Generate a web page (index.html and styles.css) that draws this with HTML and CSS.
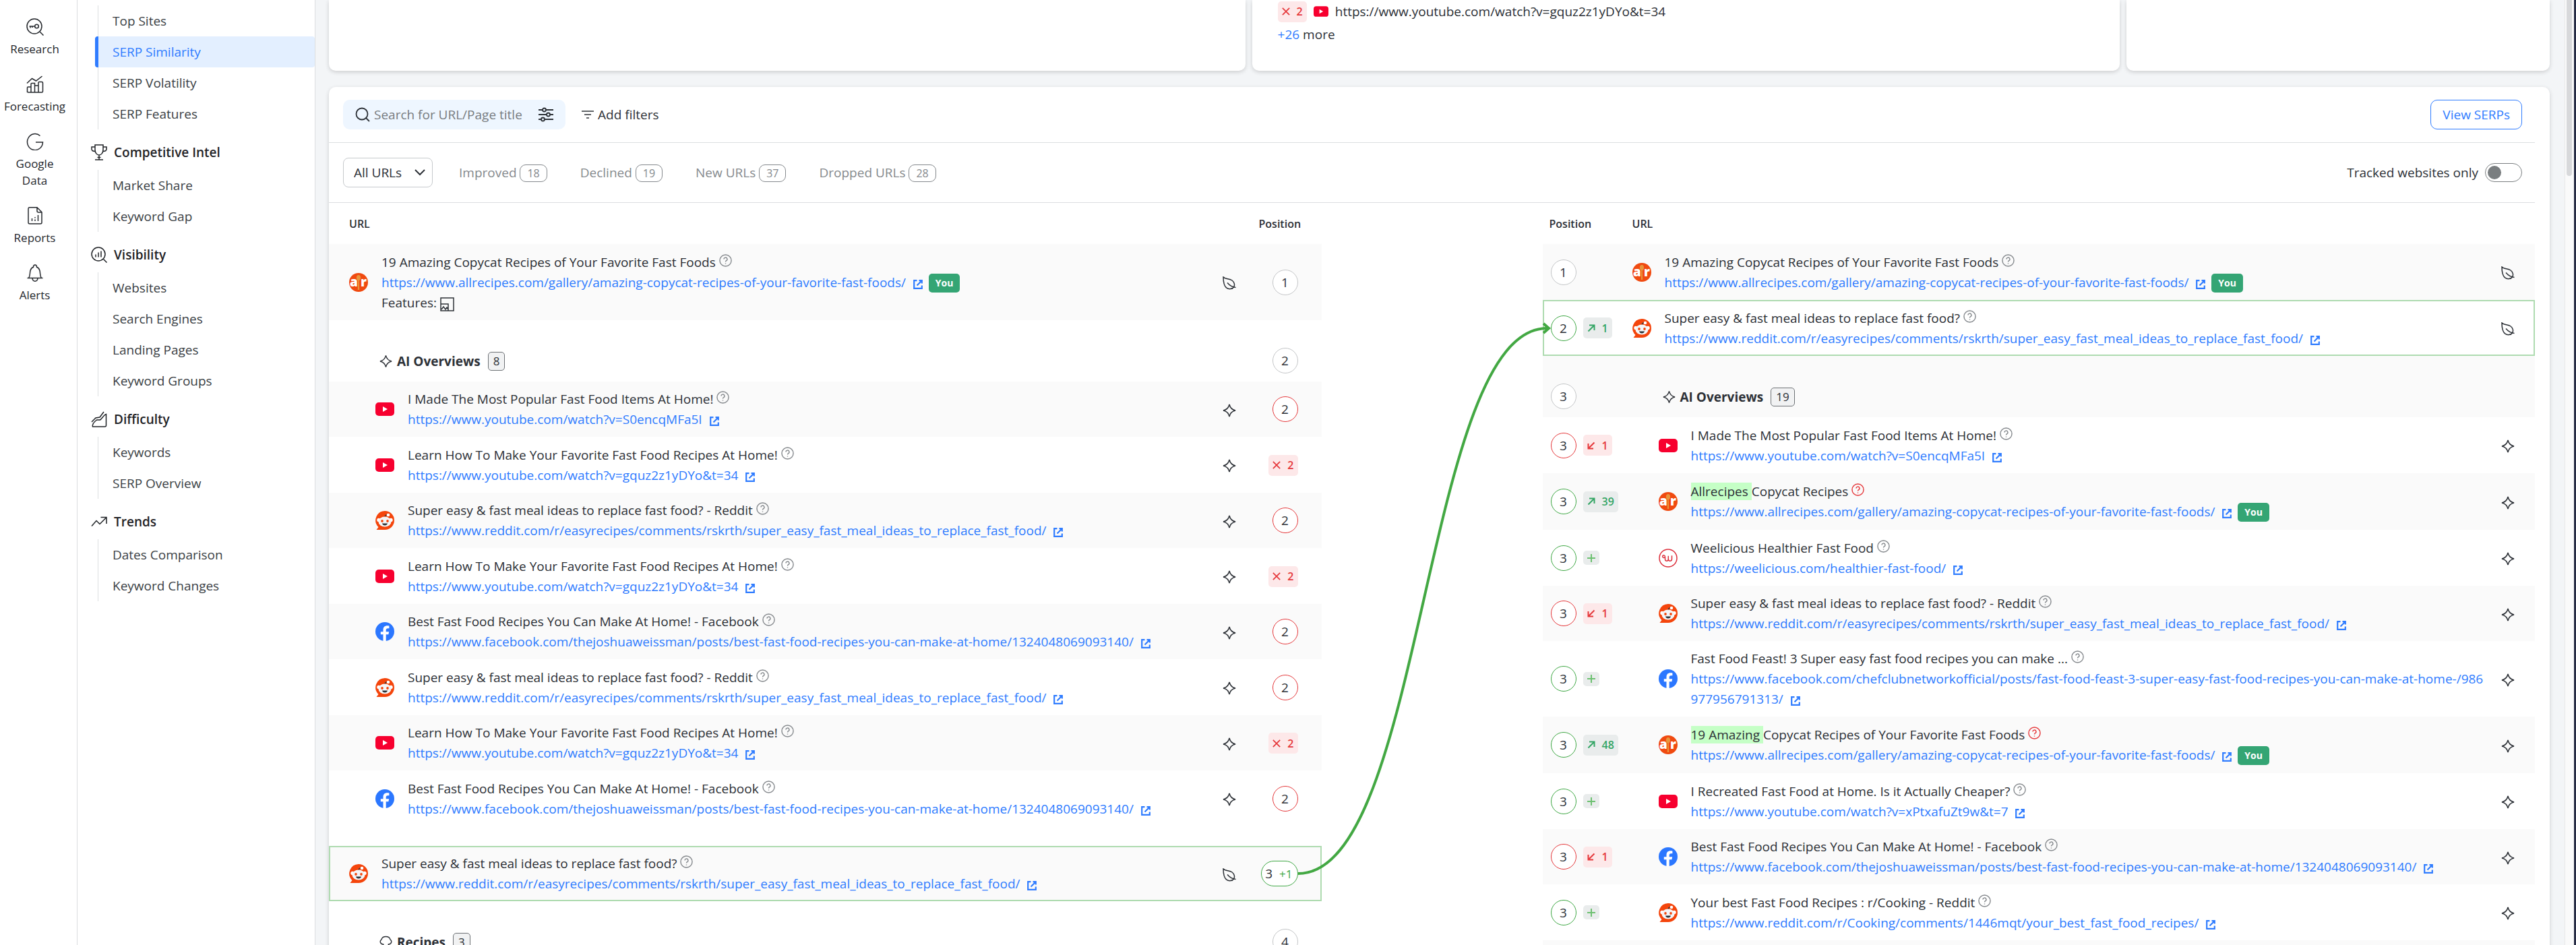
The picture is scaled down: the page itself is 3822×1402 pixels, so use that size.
FILE: index.html
```html
<!DOCTYPE html>
<html lang="en">
<head>
  <meta charset="UTF-8" />
  <meta name="viewport" content="width=device-width, initial-scale=1" />
  <title>SERP Similarity</title>
  <link rel="stylesheet" href="styles.css">
</head>
<body>
  <!-- Icon sprite -->
  <svg class="sprite" aria-hidden="true">
    <symbol id="help" viewBox="0 0 20 20"><circle cx="10" cy="10" r="9" /><path d="M7.4 8a2.6 2.6 0 1 1 3.9 2.2c-.9.5-1.3 1-1.3 2" /><path d="M10 14.2v1.2" /></symbol>
    <symbol id="ext" viewBox="0 0 14 14"><path d="M5.5 1.2H1.2v11.6h11.6V8.5M8.5 1.2h4.3v4.3M12.5 1.5 5.5 8.5" /></symbol>
    <symbol id="spark" viewBox="0 0 20 20"><path d="M10 1c1 4.500 4.500 8 9 9-4.500 1-8 4.500-9 9-1-4.500-4.500-8-9-9 4.500-1 8-4.500 9-9z" /></symbol>
    <symbol id="leaf" viewBox="0 0 20 20"><path d="M1 1c3 3.500 9 2 13 5 3.500 2.600 4.500 7 2.500 10-2 3.200-7.500 3.500-11 .8C1.500 13.600 1 7 1 1zM7 9.500c3 3.500 7 6.500 12.500 7" /></symbol>
    <symbol id="cross" viewBox="0 0 14 14"><path d="M1 1l12 12M13 1 1 13" /></symbol>
    <symbol id="up" viewBox="0 0 12 12"><path d="M1.500 10.500 10 2M3 1.500h7.500V9" /></symbol>
    <symbol id="down" viewBox="0 0 12 12"><path d="M10.500 1.500 2 10M1.500 3v7.500H9" /></symbol>
    <symbol id="plus" viewBox="0 0 12 12"><path d="M6 0v12M0 6h12" /></symbol>
    <symbol id="yt" viewBox="0 0 28 28"><rect x="0" y="4" width="28" height="20" rx="5" fill="#f7002f" /><path d="M11 10v8l7-4z" fill="#fff" /></symbol>
    <symbol id="fb" viewBox="0 0 28 28"><circle cx="14" cy="14" r="14" fill="#2b77ff" /><path d="M11.500 28V18.300H7.800v-4h3.700v-2.600c0-4.300 2.100-6.400 6.200-6.400 1 0 2 .1 2.700.3v3.700h-1.900c-2 0-2.800.9-2.800 2.600v2.400h4.500l-.8 4h-3.700V28z" fill="#fff" /></symbol>
    <symbol id="reddit" viewBox="0 0 28 28"><path d="M14 0a14 14 0 1 1 0 28H1.500l3-4A14 14 0 0 1 14 0z" fill="#f4450c" /><path d="M14 9.500c.3-2.800 1.500-4 4-3.500" fill="none" stroke="#333" stroke-width="1.400" /><circle cx="19" cy="6" r="2.300" fill="#fff" /><circle cx="5" cy="13.500" r="2.700" fill="#fff" /><circle cx="23" cy="13.500" r="2.700" fill="#fff" /><ellipse cx="14" cy="16" rx="9.500" ry="7.500" fill="#f4f6f8" /><ellipse cx="10" cy="15" rx="1.800" ry="2" fill="#f4450c" /><ellipse cx="18" cy="15" rx="1.800" ry="2" fill="#f4450c" /><path d="M10 18.500h8c-.4 2-2 3-4 3s-3.600-1-4-3z" fill="#2b3236" /></symbol>
    <symbol id="ar" viewBox="0 0 28 28"><circle cx="14" cy="14" r="14" fill="#f04a10" /><path d="M14 3c4 0 4 7 .8 8.500L15.200 25h-2.400l.4-13.500C10 10 10 3 14 3z" fill="#e8963c" /><text x="1" y="20" class="ar-letters">a</text><text x="17" y="20" class="ar-letters">r</text></symbol>
    <symbol id="wee" viewBox="0 0 28 28"><circle cx="14" cy="14" r="13" fill="#fff" stroke="#dc2f3c" stroke-width="1.500" /><path d="M9.500 12.500c-2 2-4.500.2-3.600-1.800.9-1.600 3.600-1 3.600 1.500v3c0 4 4.800 4 4.800 0v-4.500 4.500c0 4 5.200 4 5.200 0v-5" fill="none" stroke="#dc2f3c" stroke-width="1.500" /></symbol>
  </svg>

  <div class="app">
    <nav class="rail" aria-label="Main">
      <a href="#"><svg viewBox="0 0 26 26"><circle cx="12" cy="12" r="11" /><circle cx="15.500" cy="12" r="2.800" /><path d="M12.700 12H4.500M6 12v2.500M9 12v2M20 20l5.500 5.500" /></svg>Research</a>
      <a href="#"><svg viewBox="0 0 26 26"><path d="M1.500 25V18q0-1 1-1H7v8M7 25V12.500q0-1 1-1h4.500V25M12.500 25V15h5.500v10M18 25V10.500q0-1 1-1h4q1.500 0 1.500 1.500v12.500q0 1.500-1.500 1.500H3q-1.500 0-1.500-1.500M1 11.500l7.500-7 6 3.500L23.500 1" /></svg>Forecasting</a>
      <a href="#"><svg viewBox="0 0 26 26"><path d="M20.500 4.500A11.500 12 0 1 0 24.500 14H14" /></svg>Google Data</a>
      <a href="#"><svg viewBox="0 0 26 26"><path d="M5 .8h11l7 7V23q0 2-2 2H5q-2 0-2-2V3q0-2.200 2-2.200zM16 1v5q0 2 2 2h5M8.500 21v-4M13 21v-2.500M13 16.500v-1.500M17.500 21v-9" /></svg>Reports</a>
      <a href="#"><svg viewBox="0 0 26 26"><path d="M1.500 20.500h23M3.500 20.500c2.500-3 1.500-7 2.500-11 .8-3 2.500-4.500 4.500-5.200C10.500 0 15.500 0 15.500 4.300c2 .7 3.700 2.200 4.500 5.200 1 4 0 8 2.500 11M9 21c.5 5.500 7.500 5.500 8 0" /></svg>Alerts</a>
    </nav>

    <nav class="sidebar" aria-label="Research">
      <ul>
        <li><a href="#">Top Sites</a></li>
        <li><a href="#" class="active">SERP Similarity</a></li>
        <li><a href="#">SERP Volatility</a></li>
        <li><a href="#">SERP Features</a></li>
      </ul>
      <h2><svg viewBox="0 0 24 24"><path d="M6 1h12v7c0 5-3 8-6 8s-6-3-6-8zM6 4H1v3c0 2.500 2 3.500 5 3.500M18 4h5v3c0 2.500-2 3.500-5 3.500M12 16v6.500M6 23h12M9.500 19.500h5" /></svg>Competitive Intel</h2>
      <ul>
        <li><a href="#">Market Share</a></li>
        <li><a href="#">Keyword Gap</a></li>
      </ul>
      <h2><svg viewBox="0 0 24 24"><circle cx="11" cy="11" r="10" /><path d="M18.500 18.500 23.500 23.500M7 15.500v-4M11 15.500v-7M15 15.500V6.500" /></svg>Visibility</h2>
      <ul>
        <li><a href="#">Websites</a></li>
        <li><a href="#">Search Engines</a></li>
        <li><a href="#">Landing Pages</a></li>
        <li><a href="#">Keyword Groups</a></li>
      </ul>
      <h2><svg viewBox="0 0 24 24"><path d="M1 16l6-6 6-1 6-8M2.500 23c-1-4 2-7 6-10h5c2-1 6-8 9-8.500V21q0 2-2 2z" /></svg>Difficulty</h2>
      <ul>
        <li><a href="#">Keywords</a></li>
        <li><a href="#">SERP Overview</a></li>
      </ul>
      <h2><svg viewBox="0 0 24 24"><path d="M1 18.500l7-8 5 5L23 5.500M14.500 5.500H23V15" /></svg>Trends</h2>
      <ul>
        <li><a href="#">Dates Comparison</a></li>
        <li><a href="#">Keyword Changes</a></li>
      </ul>
    </nav>

    <main>
      <div class="summary">
        <section class="card"></section>
        <section class="card">
          <p><span class="change lost"><svg><use href="#cross" /></svg>2</span><svg class="mini"><use href="#yt" /></svg>https://www.youtube.com/watch?v=gquz2z1yDYo&amp;t=34</p>
          <p><a href="#">+26</a>&nbsp;more</p>
        </section>
        <section class="card"></section>
      </div>

      <section class="card report">
        <div class="tools">
          <div class="search">
            <svg viewBox="0 0 22 22"><circle cx="10" cy="10" r="8.500" /><path d="M16 16l5 5" /></svg>
            <input type="text" placeholder="Search for URL/Page title" aria-label="Search for URL/Page title">
            <button type="button" class="plain" aria-label="Search options"><svg viewBox="0 0 22 22"><path d="M0 4h6M11 4h11M0 11h12M17 11h5M0 18h4M9 18h13" /><circle cx="8.500" cy="4" r="2.500" /><circle cx="14.500" cy="11" r="2.500" /><circle cx="6.500" cy="18" r="2.500" /></svg></button>
          </div>
          <button type="button" class="plain filters"><svg viewBox="0 0 18 18"><path d="M0 4h18M4 9h10M7 14h4" /></svg>Add filters</button>
          <button type="button" class="outline">View SERPs</button>
        </div>

        <div class="tabs">
          <div class="select">
            <select aria-label="URL type"><option>All URLs</option></select>
            <svg viewBox="0 0 16 10"><path d="M1 1l7 7 7-7" /></svg>
          </div>
          <button type="button" class="plain">Improved <span>18</span></button>
          <button type="button" class="plain">Declined <span>19</span></button>
          <button type="button" class="plain">New URLs <span>37</span></button>
          <button type="button" class="plain">Dropped URLs <span>28</span></button>
          <label class="toggle">Tracked websites only <input type="checkbox"></label>
        </div>

        <div class="compare">
          <table class="before">
            <thead>
              <tr><th>URL</th><th class="type"></th><th class="pos">Position</th></tr>
            </thead>
            <tbody>
              <tr class="alt tall">
                <td><div class="page"><svg class="fav"><use href="#ar" /></svg><div>19 Amazing Copycat Recipes of Your Favorite Fast Foods <svg class="help"><use href="#help" /></svg><br><a href="#">https://www.allrecipes.com/gallery/amazing-copycat-recipes-of-your-favorite-fast-foods/ <svg class="ext"><use href="#ext" /></svg></a> <b class="you">You</b><br>Features: <svg class="feature" viewBox="0 0 21 21"><path d="M1 1h19v19H1zM1 10h11v10M2 18l3-4 3 4 2-3 2 3" /></svg></div></div></td>
                <td class="type"><svg><use href="#leaf" /></svg></td>
                <td class="pos"><span class="rank">1</span></td>
              </tr>
              <tr class="group">
                <td><h3><svg><use href="#spark" /></svg>AI Overviews <span>8</span></h3></td>
                <td class="type"></td>
                <td class="pos"><span class="rank">2</span></td>
              </tr>
              <tr class="alt nested">
                <td><div class="page"><svg class="fav"><use href="#yt" /></svg><div>I Made The Most Popular Fast Food Items At Home! <svg class="help"><use href="#help" /></svg><br><a href="#">https://www.youtube.com/watch?v=S0encqMFa5I <svg class="ext"><use href="#ext" /></svg></a></div></div></td>
                <td class="type"><svg><use href="#spark" /></svg></td>
                <td class="pos"><span class="rank worse">2</span></td>
              </tr>
              <tr class="nested">
                <td><div class="page"><svg class="fav"><use href="#yt" /></svg><div>Learn How To Make Your Favorite Fast Food Recipes At Home! <svg class="help"><use href="#help" /></svg><br><a href="#">https://www.youtube.com/watch?v=gquz2z1yDYo&amp;t=34 <svg class="ext"><use href="#ext" /></svg></a></div></div></td>
                <td class="type"><svg><use href="#spark" /></svg></td>
                <td class="pos"><span class="change lost"><svg><use href="#cross" /></svg>2</span></td>
              </tr>
              <tr class="alt nested">
                <td><div class="page"><svg class="fav"><use href="#reddit" /></svg><div>Super easy &amp; fast meal ideas to replace fast food? - Reddit <svg class="help"><use href="#help" /></svg><br><a href="#">https://www.reddit.com/r/easyrecipes/comments/rskrth/super_easy_fast_meal_ideas_to_replace_fast_food/ <svg class="ext"><use href="#ext" /></svg></a></div></div></td>
                <td class="type"><svg><use href="#spark" /></svg></td>
                <td class="pos"><span class="rank worse">2</span></td>
              </tr>
              <tr class="nested">
                <td><div class="page"><svg class="fav"><use href="#yt" /></svg><div>Learn How To Make Your Favorite Fast Food Recipes At Home! <svg class="help"><use href="#help" /></svg><br><a href="#">https://www.youtube.com/watch?v=gquz2z1yDYo&amp;t=34 <svg class="ext"><use href="#ext" /></svg></a></div></div></td>
                <td class="type"><svg><use href="#spark" /></svg></td>
                <td class="pos"><span class="change lost"><svg><use href="#cross" /></svg>2</span></td>
              </tr>
              <tr class="alt nested">
                <td><div class="page"><svg class="fav"><use href="#fb" /></svg><div>Best Fast Food Recipes You Can Make At Home! - Facebook <svg class="help"><use href="#help" /></svg><br><a href="#">https://www.facebook.com/thejoshuaweissman/posts/best-fast-food-recipes-you-can-make-at-home/1324048069093140/ <svg class="ext"><use href="#ext" /></svg></a></div></div></td>
                <td class="type"><svg><use href="#spark" /></svg></td>
                <td class="pos"><span class="rank worse">2</span></td>
              </tr>
              <tr class="nested">
                <td><div class="page"><svg class="fav"><use href="#reddit" /></svg><div>Super easy &amp; fast meal ideas to replace fast food? - Reddit <svg class="help"><use href="#help" /></svg><br><a href="#">https://www.reddit.com/r/easyrecipes/comments/rskrth/super_easy_fast_meal_ideas_to_replace_fast_food/ <svg class="ext"><use href="#ext" /></svg></a></div></div></td>
                <td class="type"><svg><use href="#spark" /></svg></td>
                <td class="pos"><span class="rank worse">2</span></td>
              </tr>
              <tr class="alt nested">
                <td><div class="page"><svg class="fav"><use href="#yt" /></svg><div>Learn How To Make Your Favorite Fast Food Recipes At Home! <svg class="help"><use href="#help" /></svg><br><a href="#">https://www.youtube.com/watch?v=gquz2z1yDYo&amp;t=34 <svg class="ext"><use href="#ext" /></svg></a></div></div></td>
                <td class="type"><svg><use href="#spark" /></svg></td>
                <td class="pos"><span class="change lost"><svg><use href="#cross" /></svg>2</span></td>
              </tr>
              <tr class="nested">
                <td><div class="page"><svg class="fav"><use href="#fb" /></svg><div>Best Fast Food Recipes You Can Make At Home! - Facebook <svg class="help"><use href="#help" /></svg><br><a href="#">https://www.facebook.com/thejoshuaweissman/posts/best-fast-food-recipes-you-can-make-at-home/1324048069093140/ <svg class="ext"><use href="#ext" /></svg></a></div></div></td>
                <td class="type"><svg><use href="#spark" /></svg></td>
                <td class="pos"><span class="rank worse">2</span></td>
              </tr>
              <tr class="spacer"><td colspan="3"></td></tr>
              <tr class="alt picked">
                <td><div class="page"><svg class="fav"><use href="#reddit" /></svg><div>Super easy &amp; fast meal ideas to replace fast food? <svg class="help"><use href="#help" /></svg><br><a href="#">https://www.reddit.com/r/easyrecipes/comments/rskrth/super_easy_fast_meal_ideas_to_replace_fast_food/ <svg class="ext"><use href="#ext" /></svg></a></div></div></td>
                <td class="type"><svg><use href="#leaf" /></svg></td>
                <td class="pos"><span class="rank better pill">3 <small>+1</small></span></td>
              </tr>
              <tr class="group">
                <td><h3><svg viewBox="0 0 20 20"><path d="M6 19v-6C1 13 0 8 3 6c1-4 4-5 7-5s6 1 7 5c3 2 2 7-3 7v6z" /></svg>Recipes <span>3</span></h3></td>
                <td class="type"></td>
                <td class="pos"><span class="rank">4</span></td>
              </tr>
            </tbody>
          </table>

          <!-- Links the same URL in both lists -->
          <div class="link">
            <svg><path d="M-35 995C152 995 151 186 334 186" /><path class="tip" d="M329 179l8 7-8 7" /></svg>
          </div>

          <table class="after">
            <thead>
              <tr><th class="pos">Position</th><th>URL</th><th class="type"></th></tr>
            </thead>
            <tbody>
              <tr class="alt">
                <td class="pos"><span class="rank">1</span></td>
                <td><div class="page"><svg class="fav"><use href="#ar" /></svg><div>19 Amazing Copycat Recipes of Your Favorite Fast Foods <svg class="help"><use href="#help" /></svg><br><a href="#">https://www.allrecipes.com/gallery/amazing-copycat-recipes-of-your-favorite-fast-foods/ <svg class="ext"><use href="#ext" /></svg></a> <b class="you">You</b></div></div></td>
                <td class="type"><svg><use href="#leaf" /></svg></td>
              </tr>
              <tr class="picked">
                <td class="pos"><span class="rank better">2</span><span class="change gain"><svg><use href="#up" /></svg>1</span></td>
                <td><div class="page"><svg class="fav"><use href="#reddit" /></svg><div>Super easy &amp; fast meal ideas to replace fast food? <svg class="help"><use href="#help" /></svg><br><a href="#">https://www.reddit.com/r/easyrecipes/comments/rskrth/super_easy_fast_meal_ideas_to_replace_fast_food/ <svg class="ext"><use href="#ext" /></svg></a></div></div></td>
                <td class="type"><svg><use href="#leaf" /></svg></td>
              </tr>
              <tr class="alt group">
                <td class="pos"><span class="rank">3</span></td>
                <td><h3><svg><use href="#spark" /></svg>AI Overviews <span>19</span></h3></td>
                <td class="type"></td>
              </tr>
              <tr class="nested">
                <td class="pos"><span class="rank worse">3</span><span class="change lost"><svg><use href="#down" /></svg>1</span></td>
                <td><div class="page"><svg class="fav"><use href="#yt" /></svg><div>I Made The Most Popular Fast Food Items At Home! <svg class="help"><use href="#help" /></svg><br><a href="#">https://www.youtube.com/watch?v=S0encqMFa5I <svg class="ext"><use href="#ext" /></svg></a></div></div></td>
                <td class="type"><svg><use href="#spark" /></svg></td>
              </tr>
              <tr class="alt nested own">
                <td class="pos"><span class="rank better">3</span><span class="change gain"><svg><use href="#up" /></svg>39</span></td>
                <td><div class="page"><svg class="fav"><use href="#ar" /></svg><div><mark>Allrecipes </mark>Copycat Recipes <svg class="help changed"><use href="#help" /></svg><br><a href="#">https://www.allrecipes.com/gallery/amazing-copycat-recipes-of-your-favorite-fast-foods/ <svg class="ext"><use href="#ext" /></svg></a> <b class="you">You</b></div></div></td>
                <td class="type"><svg><use href="#spark" /></svg></td>
              </tr>
              <tr class="nested">
                <td class="pos"><span class="rank better">3</span><span class="change new"><svg><use href="#plus" /></svg></span></td>
                <td><div class="page"><svg class="fav"><use href="#wee" /></svg><div>Weelicious Healthier Fast Food <svg class="help"><use href="#help" /></svg><br><a href="#">https://weelicious.com/healthier-fast-food/ <svg class="ext"><use href="#ext" /></svg></a></div></div></td>
                <td class="type"><svg><use href="#spark" /></svg></td>
              </tr>
              <tr class="alt nested">
                <td class="pos"><span class="rank worse">3</span><span class="change lost"><svg><use href="#down" /></svg>1</span></td>
                <td><div class="page"><svg class="fav"><use href="#reddit" /></svg><div>Super easy &amp; fast meal ideas to replace fast food? - Reddit <svg class="help"><use href="#help" /></svg><br><a href="#">https://www.reddit.com/r/easyrecipes/comments/rskrth/super_easy_fast_meal_ideas_to_replace_fast_food/ <svg class="ext"><use href="#ext" /></svg></a></div></div></td>
                <td class="type"><svg><use href="#spark" /></svg></td>
              </tr>
              <tr class="nested">
                <td class="pos"><span class="rank better">3</span><span class="change new"><svg><use href="#plus" /></svg></span></td>
                <td><div class="page"><svg class="fav"><use href="#fb" /></svg><div>Fast Food Feast! 3 Super easy fast food recipes you can make ... <svg class="help"><use href="#help" /></svg><br><a href="#">https://www.facebook.com/chefclubnetworkofficial/posts/fast-food-feast-3-super-easy-fast-food-recipes-you-can-make-at-home-/986977956791313/ <svg class="ext"><use href="#ext" /></svg></a></div></div></td>
                <td class="type"><svg><use href="#spark" /></svg></td>
              </tr>
              <tr class="alt nested own">
                <td class="pos"><span class="rank better">3</span><span class="change gain"><svg><use href="#up" /></svg>48</span></td>
                <td><div class="page"><svg class="fav"><use href="#ar" /></svg><div><mark>19 Amazing </mark>Copycat Recipes of Your Favorite Fast Foods <svg class="help changed"><use href="#help" /></svg><br><a href="#">https://www.allrecipes.com/gallery/amazing-copycat-recipes-of-your-favorite-fast-foods/ <svg class="ext"><use href="#ext" /></svg></a> <b class="you">You</b></div></div></td>
                <td class="type"><svg><use href="#spark" /></svg></td>
              </tr>
              <tr class="nested">
                <td class="pos"><span class="rank better">3</span><span class="change new"><svg><use href="#plus" /></svg></span></td>
                <td><div class="page"><svg class="fav"><use href="#yt" /></svg><div>I Recreated Fast Food at Home. Is it Actually Cheaper? <svg class="help"><use href="#help" /></svg><br><a href="#">https://www.youtube.com/watch?v=xPtxafuZt9w&amp;t=7 <svg class="ext"><use href="#ext" /></svg></a></div></div></td>
                <td class="type"><svg><use href="#spark" /></svg></td>
              </tr>
              <tr class="alt nested">
                <td class="pos"><span class="rank worse">3</span><span class="change lost"><svg><use href="#down" /></svg>1</span></td>
                <td><div class="page"><svg class="fav"><use href="#fb" /></svg><div>Best Fast Food Recipes You Can Make At Home! - Facebook <svg class="help"><use href="#help" /></svg><br><a href="#">https://www.facebook.com/thejoshuaweissman/posts/best-fast-food-recipes-you-can-make-at-home/1324048069093140/ <svg class="ext"><use href="#ext" /></svg></a></div></div></td>
                <td class="type"><svg><use href="#spark" /></svg></td>
              </tr>
              <tr class="nested">
                <td class="pos"><span class="rank better">3</span><span class="change new"><svg><use href="#plus" /></svg></span></td>
                <td><div class="page"><svg class="fav"><use href="#reddit" /></svg><div>Your best Fast Food Recipes : r/Cooking - Reddit <svg class="help"><use href="#help" /></svg><br><a href="#">https://www.reddit.com/r/Cooking/comments/1446mqt/your_best_fast_food_recipes/ <svg class="ext"><use href="#ext" /></svg></a></div></div></td>
                <td class="type"><svg><use href="#spark" /></svg></td>
              </tr>
              <tr class="alt nested"><td class="pos"></td><td></td><td class="type"></td></tr>
            </tbody>
          </table>
        </div>
      </section>
    </main>

    <div class="scrollbar"><span></span></div>
  </div>
</body>
</html>
```
FILE: styles.css
```css
* {
  box-sizing: border-box;
}

body {
  margin: 0;
  font-family: "Open Sans", "Noto Sans", sans-serif;
  font-size: 19px;
  line-height: 30px;
  color: #2c3036;
  background: #f3f5f7;
}

a {
  color: #2f7cff;
  text-decoration: none;
}

svg {
  fill: none;
  stroke: currentColor;
  stroke-width: 1.5;
}

button, input, select {
  font: inherit;
  color: inherit;
}

.sprite {
  display: none;
}

.app {
  display: flex;
  height: 100vh;
  overflow: hidden;
}

/* Left rail */
.rail {
  width: 115px;
  padding: 24px 12px 0 0;
  background: #fff;
  border-right: 1px solid #dcdee0;
}

.rail a {
  display: flex;
  flex-direction: column;
  align-items: center;
  padding: 0 16px 0 17px;
  margin-bottom: 24px;
  font-size: 17px;
  line-height: 25px;
  text-align: center;
  color: #25282d;
}

.rail svg {
  flex: none;
  width: 26px;
  height: 26px;
  margin: 3px 0 7px;
}

/* Section menu */
.sidebar {
  width: 353px;
  padding: 8px 0 0 26px;
  background: #fff;
  border-right: 1px solid #dcdee0;
}

.sidebar ul {
  list-style: none;
  margin: 0;
  padding: 0;
}

.sidebar li {
  margin-left: 4px;
  border-left: 1px solid #dcdee0;
}

.sidebar li a {
  display: block;
  margin-left: -5px;
  padding: 8px 0 8px 21px;
  border-left: 5px solid transparent;
  color: #3b3f45;
}

.sidebar li a.active {
  color: #2f7cff;
  background: #e3efff;
  border-left-color: #2f7cff;
  border-radius: 4px;
}

.sidebar h2 {
  display: flex;
  align-items: center;
  gap: 10px;
  height: 60px;
  margin: 0 0 0 -6px;
  padding-top: 8px;
  font-size: 19px;
  font-weight: 600;
  color: #1f2226;
}

.sidebar h2 svg {
  width: 24px;
  height: 24px;
}

/* Content */
main {
  flex: 1;
  min-width: 0;
  padding: 0 22px 0 20px;
}

.card {
  background: #fff;
  border-radius: 10px;
  box-shadow: 0 2px 6px rgba(0, 0, 0, 0.16);
}

.summary {
  display: grid;
  grid-template-columns: 1360fr 1288fr 628fr;
  gap: 10px;
  margin-bottom: 24px;
}

.summary .card {
  height: 105px;
  padding: 0 38px;
  border-radius: 0 0 10px 10px;
}

.summary p {
  display: flex;
  align-items: center;
  height: 34px;
  margin: 0;
}

.mini {
  width: 22px;
  height: 22px;
  margin: 0 10px;
  stroke: none;
}

.report {
  padding-right: 22px;
  min-height: 100vh;
}

.tools,
.tabs {
  display: flex;
  align-items: center;
  padding: 0 19px 0 21px;
  border-bottom: 1px solid #dcdee0;
}

.tools {
  height: 83px;
}

.tabs {
  height: 89px;
  gap: 39px;
}

.plain {
  padding: 0;
  border: 0;
  background: none;
}

.search {
  display: flex;
  align-items: center;
  width: 330px;
  height: 44px;
  padding: 0 18px;
  background: #eef6ff;
  border-radius: 10px;
}

.search svg {
  display: block;
  width: 22px;
  height: 22px;
  stroke-width: 1.8;
}

.search input {
  flex: 1;
  width: 0;
  padding: 0 6px;
  border: 0;
  background: none;
}

.search input::placeholder {
  color: #777b80;
}

.filters {
  display: flex;
  align-items: center;
  gap: 6px;
  margin-left: 24px;
}

.filters svg {
  width: 18px;
  height: 18px;
}

.outline {
  height: 44px;
  margin-left: auto;
  padding: 0 17px;
  border: 1px solid #2f7cff;
  border-radius: 10px;
  background: #fff;
  color: #2f7cff;
}

.select {
  position: relative;
}

.select select {
  display: block;
  width: 133px;
  height: 44px;
  padding: 0 40px 0 15px;
  border: 1px solid #c6c9cc;
  border-radius: 8px;
  background: #fff;
  appearance: none;
}

.select svg {
  position: absolute;
  right: 11px;
  top: 17px;
  width: 16px;
  height: 10px;
  stroke-width: 2;
  pointer-events: none;
}

.tabs button {
  margin-right: 10px;
  color: #85898d;
}

.tabs button span {
  display: inline-block;
  padding: 0 10px;
  border: 1px solid #85898d;
  border-radius: 9px;
  font-size: 16px;
  line-height: 24px;
}

.toggle {
  display: flex;
  align-items: center;
  gap: 10px;
  margin-left: auto;
}

.toggle input {
  width: 55px;
  height: 28px;
  margin: 0;
  padding: 3px;
  border: 1px solid #7a7e80;
  border-radius: 14px;
  background: #fff;
  appearance: none;
}

.toggle input::before {
  content: "";
  display: block;
  width: 20px;
  height: 20px;
  border-radius: 50%;
  background: #7a7e80;
}

.toggle input:checked {
  padding-left: 30px;
}

/* Comparison tables */
.compare {
  display: grid;
  grid-template-columns: 1fr 328px 1fr;
  align-items: start;
}

table {
  width: 100%;
  table-layout: fixed;
  border-spacing: 0;
}

th {
  height: 61px;
  padding: 0;
  font-size: 16px;
  font-weight: 600;
  text-align: left;
}

td {
  height: 83px;
  padding: 0;
}

.alt td {
  background: #fafafa;
}

.alt.nested td {
  height: 82px;
}

.alt.own td {
  height: 84px;
}

.tall td {
  height: 113px;
}

.group td {
  height: 91px;
  padding-bottom: 12px;
  vertical-align: bottom;
}

.spacer td {
  height: 29px;
}

.picked td {
  border: 2px solid #aedbb0;
  border-width: 2px 0;
}

.picked td:first-child {
  border-left-width: 2px;
}

.picked td:last-child {
  border-right-width: 2px;
}

.before .picked td {
  height: 82px;
}

.before th:first-child,
.before td:first-child {
  padding-left: 30px;
}

.before .picked td:first-child {
  padding-left: 28px;
}

.before .type {
  width: 64px;
  text-align: center;
}

.before .pos {
  width: 105px;
}

.before th.pos {
  padding-left: 12px;
}

.before td.pos {
  padding-right: 35px;
  text-align: right;
}

.before .picked td.pos {
  padding-right: 33px;
}

.after .pos {
  width: 122px;
  padding-left: 12px;
}

.after th.pos {
  padding-left: 10px;
}

.after .picked td.pos {
  padding-left: 10px;
}

.after th:nth-child(2),
.after td:nth-child(2) {
  padding-left: 11px;
  padding-right: 8px;
}

.after .type {
  width: 63px;
  padding-right: 17px;
  text-align: center;
}

.after .picked td.type {
  padding-right: 15px;
}

.page {
  display: flex;
  align-items: center;
  gap: 20px;
  padding: 11px 0;
  word-break: break-all;
}

.picked .page {
  padding: 0;
}

.nested .page {
  padding-left: 39px;
}

.fav {
  flex: none;
  width: 28px;
  height: 28px;
  stroke: none;
}

.ar-letters {
  font-family: "Open Sans", sans-serif;
  font-size: 19px;
  font-weight: 800;
  fill: #fff;
}

.help {
  width: 19px;
  height: 19px;
  color: #85898d;
  vertical-align: 0;
}

.help.changed {
  color: #e5383b;
}

.ext {
  width: 14px;
  height: 14px;
  margin: 0 4px 0 6px;
  stroke-width: 2.2;
  vertical-align: -3px;
}

.feature {
  width: 21px;
  height: 21px;
  vertical-align: -6px;
}

.you {
  display: inline-block;
  margin-top: 2px;
  padding: 0 10px;
  border-radius: 5px;
  background: #34a574;
  color: #fff;
  font-size: 14px;
  line-height: 28px;
  vertical-align: top;
}

mark {
  background: #c5ffc6;
  color: inherit;
}

.type svg {
  display: inline-block;
  width: 20px;
  height: 20px;
  vertical-align: middle;
}

.group h3 {
  display: flex;
  align-items: center;
  gap: 7px;
  margin: 0;
  padding: 5px 0 4px 45px;
  font-size: 19px;
  line-height: 28px;
}

.group h3 svg {
  width: 19px;
  height: 20px;
}

.group h3 span {
  margin-left: 4px;
  padding: 0 7px;
  border: 1px solid #6d7175;
  border-radius: 5px;
  background: #f1f2f3;
  font-size: 17px;
  font-weight: 400;
  line-height: 26px;
}

.rank {
  display: inline-block;
  min-width: 38px;
  height: 38px;
  border: 1px solid #c4c6c8;
  border-radius: 19px;
  background: #fff;
  line-height: 36px;
  text-align: center;
  vertical-align: middle;
}

.rank.worse {
  border-color: #e5383b;
}

.rank.better {
  border-color: #3fa845;
}

.pill {
  padding: 0 7px 0 5px;
}

.pill small {
  margin-left: 5px;
  font-size: 17px;
  color: #3fa845;
}

.change {
  display: inline-flex;
  align-items: center;
  gap: 10px;
  height: 31px;
  padding: 0 6px;
  border-radius: 5px;
  font-size: 16px;
  font-weight: 600;
  vertical-align: middle;
}

.change svg {
  width: 12px;
  height: 12px;
  stroke-width: 2;
}

.after .change {
  margin-left: 10px;
}

.lost {
  color: #e5383b;
  background: #fde8e9;
}

.gain {
  color: #34a565;
  background: #e9ecec;
}

.new {
  height: 21px;
  color: #6cc070;
  background: #e9ecec;
}

/* Connector between the two lists */
.link {
  position: relative;
}

.link svg {
  position: absolute;
  top: 0;
  left: 0;
  width: 328px;
  height: 1100px;
  overflow: visible;
  stroke: #43a843;
  stroke-width: 4;
  pointer-events: none;
}

.scrollbar {
  width: 17px;
  padding: 0 4px 0 2px;
  background: #fafafa;
  border-left: 1px solid #e8e8e8;
  border-right: 3px solid #272c45;
}

.scrollbar span {
  display: block;
  width: 8px;
  height: 261px;
  border-radius: 0 0 4px 4px;
  background: #d8d9db;
}
```
